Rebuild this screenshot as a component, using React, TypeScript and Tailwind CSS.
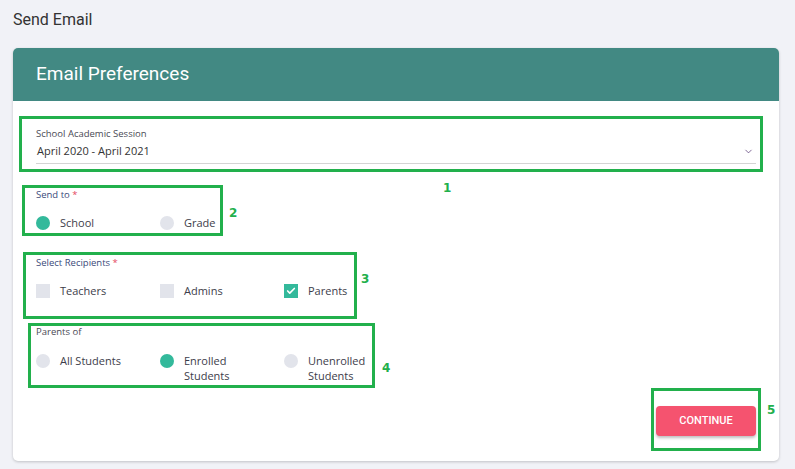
import { Check, ChevronDown } from "lucide-react";

const FORM = { fontFamily: '"Open Sans", "Noto Sans", sans-serif' };

function Radio({ on }: { on?: boolean }) {
  return (
    <span
      className={
        "block w-[14px] h-[14px] rounded-full shrink-0 " +
        (on ? "bg-[#33b99b]" : "bg-[#e2e4eb]")
      }
    />
  );
}

function Box({ on }: { on?: boolean }) {
  return (
    <span
      className={
        "flex items-center justify-center w-[14px] h-[14px] shrink-0 " +
        (on ? "bg-[#33b99b]" : "bg-[#e2e4eb]")
      }
    >
      {on && <Check size={10} strokeWidth={4} color="#fff" />}
    </span>
  );
}

function Opt({ children, box, on }: { children: React.ReactNode; box?: boolean; on?: boolean }) {
  return (
    <div className="flex items-start gap-[10px] w-[124px]">
      <div className="pt-[1px]">{box ? <Box on={on} /> : <Radio on={on} />}</div>
      <span className="text-[11px] leading-[15px] text-[#3d3d4a]">{children}</span>
    </div>
  );
}

function Label({ children, req, blue }: { children: React.ReactNode; req?: boolean; blue?: boolean }) {
  return (
    <div className={"text-[9.5px] leading-[12px] " + (blue ? "text-[#3b4a7a]" : "text-[#4a4a55]")}>
      {children}
      {req && <span className="text-[#e5475f]"> *</span>}
    </div>
  );
}

// green annotation overlays from the screenshot
const MARKS = [
  { l: 19, t: 116, w: 744, h: 56, n: "1", nx: 443, ny: 179 },
  { l: 22, t: 185, w: 201, h: 51, n: "2", nx: 229, ny: 204 },
  { l: 23, t: 252, w: 334, h: 67, n: "3", nx: 361, ny: 270 },
  { l: 28, t: 323, w: 347, h: 65, n: "4", nx: 382, ny: 359 },
  { l: 651, t: 388, w: 110, h: 63, n: "5", nx: 767, ny: 401 },
];

export default function App() {
  return (
    <div className="relative w-[795px] h-[469px] bg-[#f1f2f7] overflow-hidden">
      <div className="pl-[13px] pt-[10px]">
        <h1
          className="text-[16px] leading-[20px] text-[#333] font-normal"
          style={{ fontFamily: "Roboto, sans-serif" }}
        >
          Send Email
        </h1>

        <div className="mt-[18px] w-[766px] h-[413px] bg-white rounded-[5px] shadow-[0_1px_3px_rgba(0,0,0,0.2)] overflow-hidden">
          <div
            className="h-[53px] bg-[#428983] flex items-center pl-[23px] text-white text-[19px]"
            style={{ fontFamily: "Roboto, sans-serif" }}
          >
            Email Preferences
          </div>

          <div className="px-[23px] pt-[27px]" style={FORM}>
            <div className="w-[720px]">
              <Label>School Academic Session</Label>
              <div className="flex items-center justify-between h-[24px] border-b border-[#d4d4d4] pl-[1px] pr-[2px]">
                <span className="text-[11px] text-[#333]">April 2020 - April 2021</span>
                <ChevronDown size={11} color="#4a2a6a" strokeWidth={1.5} />
              </div>
            </div>

            <div className="mt-[25px]">
              <Label req blue>Send to</Label>
              <div className="flex mt-[14px]">
                <Opt on>School</Opt>
                <Opt>Grade</Opt>
              </div>
            </div>

            <div className="mt-[27px]">
              <Label req blue>Select Recipients</Label>
              <div className="flex mt-[14px]">
                <Opt box>Teachers</Opt>
                <Opt box>Admins</Opt>
                <Opt box on>Parents</Opt>
              </div>
            </div>

            <div className="mt-[28px]">
              <Label>Parents of</Label>
              <div className="flex mt-[15px]">
                <Opt>All Students</Opt>
                <Opt on>Enrolled<br />Students</Opt>
                <Opt>Unenrolled<br />Students</Opt>
              </div>
            </div>

            <div className="flex justify-end w-[720px] mt-[23px]">
              <button
                className="w-[100px] h-[30px] rounded-[4px] bg-[#f5536f] text-white text-[11px] font-medium shadow-[0_2px_3px_rgba(0,0,0,0.25)]"
                style={{ fontFamily: "Roboto, sans-serif" }}
              >
                CONTINUE
              </button>
            </div>
          </div>
        </div>
      </div>

      {MARKS.map((m) => (
        <div key={m.n}>
          <div
            className="absolute border-[3px] border-[#22b04c]"
            style={{ left: m.l, top: m.t, width: m.w, height: m.h }}
          />
          <span
            className="absolute text-[12px] font-bold text-[#22b04c]"
            style={{ left: m.nx, top: m.ny, fontFamily: '"DejaVu Sans", sans-serif' }}
          >
            {m.n}
          </span>
        </div>
      ))}
    </div>
  );
}
